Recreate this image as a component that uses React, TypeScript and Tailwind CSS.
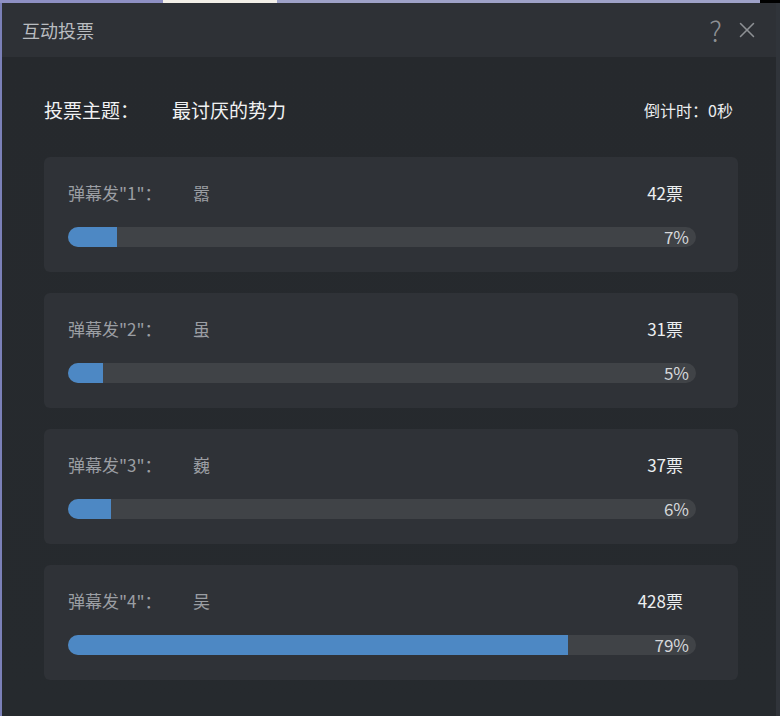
import {X} from "lucide-react";

type Option = {
    id: number;
    name: string;
    votes: number;
    percent: number;
    fill: number;
};

const options: Option[] = [
    {id: 1, name: "嚣", votes: 42, percent: 7, fill: 49},
    {id: 2, name: "虽", votes: 31, percent: 5, fill: 35},
    {id: 3, name: "巍", votes: 37, percent: 6, fill: 43},
    {id: 4, name: "吴", votes: 428, percent: 79, fill: 500},
];

function OptionCard({option}: {option: Option}) {
    return (
        <div className="rounded-md bg-[#2f3237] px-6 pt-[22px] h-[115px]">
            <div className="flex items-center justify-between pr-[31px] h-[28px]">
                <div className="flex items-center text-[17px] text-[#9b9ea3]">
                    <span className="w-[125px]">弹幕发"{option.id}"：</span>
                    <span>{option.name}</span>
                </div>
                <span className="text-[17px] text-[#eceef0]">{option.votes}票</span>
            </div>
            <div className="relative mt-[20px] h-[20px] w-[628px] rounded-full bg-[#404347]">
                <div className="h-full rounded-l-full bg-[#4d88c4]" style={{width: option.fill}}/>
                <span className="absolute right-[7px] top-0 text-[17px] leading-[20px] text-[#d5d7da]">
                    {option.percent}%
                </span>
            </div>
        </div>
    );
}

export default function App() {
    return (
        <div
            className="w-[780px] h-[716px] overflow-hidden flex flex-col bg-[#25282c]"
            style={{fontFamily: '"Noto Sans CJK SC", "Noto Sans", sans-serif'}}
        >
            <div className="flex h-[3px] shrink-0">
                <div className="w-[163px] bg-[#8e90c4]"/>
                <div className="w-[114px] bg-[#f2efe8]"/>
                <div className="flex-1 bg-[#9ea2c8]"/>
                <div className="w-[20px] bg-black"/>
            </div>
            <div className="flex flex-1 min-h-0">
                <div className="w-[2px] bg-[#7b80b8]"/>
                <div className="flex-1 flex flex-col">
                    <div className="flex items-center justify-between h-[54px] bg-[#2e3136] pl-[20px] pr-[16px]">
                        <span className="text-[18px] text-[#b9bcc0]">互动投票</span>
                        <div className="flex items-center gap-[12px] text-[#8d9094]">
                            <span className="text-[28px] font-light leading-none">?</span>
                            <X size={26} strokeWidth={1.4}/>
                        </div>
                    </div>
                    <div className="flex-1 bg-gradient-to-b from-[#26292d] to-[#262a2e] pl-[42px] pr-[38px]">
                        <div className="flex items-center justify-between h-[46px] mt-[30px] pr-[5px]">
                            <div className="flex items-center text-[19px] text-[#f1f2f3]">
                                <span className="w-[128px]">投票主题：</span>
                                <span>最讨厌的势力</span>
                            </div>
                            <span className="text-[16px] text-[#eceef0]">倒计时：0秒</span>
                        </div>
                        <div className="flex flex-col gap-[21px] mt-[24px]">
                            {options.map((option) => (
                                <OptionCard key={option.id} option={option}/>
                            ))}
                        </div>
                    </div>
                </div>
                <div className="w-[4px] bg-[#30343a]"/>
            </div>
        </div>
    );
}
